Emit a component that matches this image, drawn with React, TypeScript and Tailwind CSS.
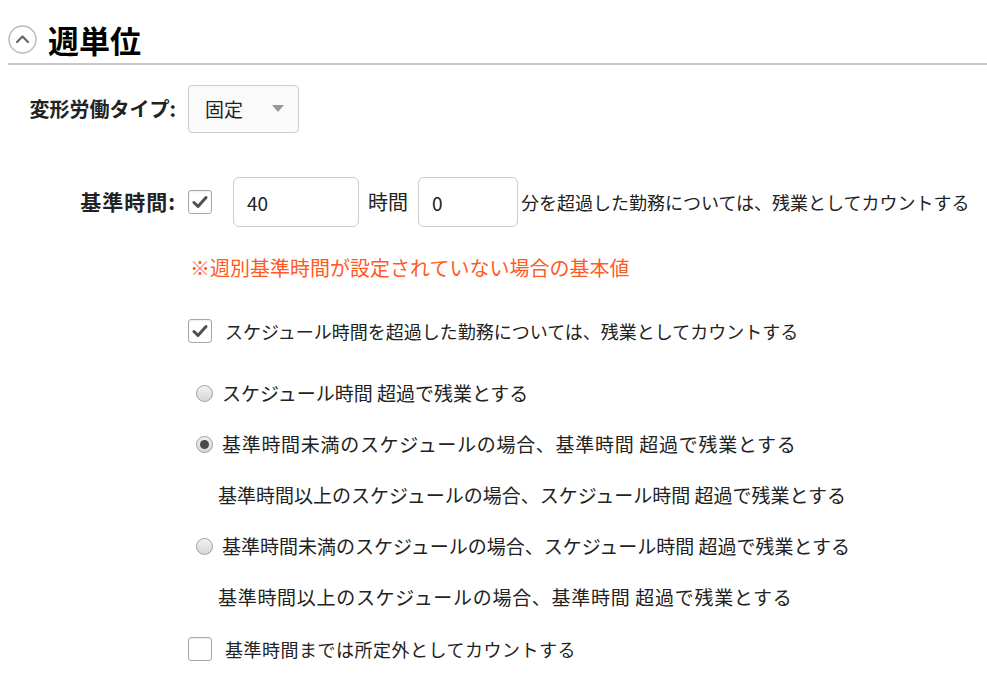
import { useState } from "react";

const font = "font-['Meiryo','Noto_Sans_CJK_JP',sans-serif]";

function CheckBox({ checked, onChange }: { checked: boolean; onChange: () => void }) {
  return (
    <button
      type="button"
      onClick={onChange}
      className="w-[24px] h-[24px] shrink-0 rounded-[3px] border border-[#a8a8a8] bg-white flex items-center justify-center shadow-[inset_0_1px_2px_rgba(0,0,0,0.08)]"
    >
      {checked && (
        <svg width="16" height="14" viewBox="0 0 16 14">
          <path d="M2 7.5 L6 11.5 L14 2.5" fill="none" stroke="#505050" strokeWidth="3" strokeLinecap="round" strokeLinejoin="round" />
        </svg>
      )}
    </button>
  );
}

function Radio({ checked, onChange }: { checked: boolean; onChange: () => void }) {
  return (
    <button
      type="button"
      onClick={onChange}
      className="w-[17px] h-[17px] shrink-0 rounded-full border border-[#a0a0a0] bg-[linear-gradient(#f2f2f2,#d6d6d6)] flex items-center justify-center"
    >
      {checked && <span className="w-[9px] h-[9px] rounded-full bg-[#4a4a4a]" />}
    </button>
  );
}

export default function App() {
  const [useBase, setUseBase] = useState(true);
  const [useSchedule, setUseSchedule] = useState(true);
  const [mode, setMode] = useState(1);
  const [countOut, setCountOut] = useState(false);

  return (
    <div className={`w-[987px] h-[675px] bg-white text-[#222] ${font}`}>
      {/* 見出し */}
      <div className="h-[63px] flex items-center pl-[8px] gap-[11px] pt-[16px]">
        <svg width="29" height="29" viewBox="0 0 29 29">
          <circle cx="14.5" cy="14.5" r="13.5" fill="#fff" stroke="#bbb" strokeWidth="1.5" />
          <path d="M9 17 L14.5 11.5 L20 17" fill="none" stroke="#666" strokeWidth="2.2" strokeLinecap="round" strokeLinejoin="round" />
        </svg>
        <h2 className="text-[31px] font-bold text-black leading-none">週単位</h2>
      </div>
      <div className="ml-[8px] h-[2px] bg-[#c8c8c8]" />

      {/* 変形労働タイプ */}
      <div className="flex items-center mt-[20px]">
        <div className="w-[176px] text-right text-[20px] font-bold text-[#222]">変形労働タイプ:</div>
        <div className="ml-[12px] w-[111px] h-[48px] border border-[#ccc] rounded-[4px] bg-[#fafafa] flex items-center justify-between pl-[16px] pr-[14px] text-[19px]">
          <span>固定</span>
          <svg width="12" height="8" viewBox="0 0 12 8">
            <path d="M0 0 L12 0 L6 7 Z" fill="#999" />
          </svg>
        </div>
      </div>

      {/* 基準時間 */}
      <div className="flex items-center mt-[44px]">
        <div className="w-[176px] text-right text-[21px] font-bold tracking-[1px]">基準時間:</div>
        <div className="ml-[12px] flex items-center text-[18px]">
          <CheckBox checked={useBase} onChange={() => setUseBase(!useBase)} />
          <input
            defaultValue="40"
            className="ml-[21px] w-[126px] h-[50px] border border-[#ccc] rounded-[6px] px-[13px] text-[19px] outline-none"
          />
          <span className="ml-[9px] mr-[10px] text-[20px]">時間</span>
          <input
            defaultValue="0"
            className="w-[100px] h-[50px] border border-[#ccc] rounded-[6px] px-[13px] text-[19px] outline-none"
          />
          <span className="ml-[3px]">分を超過した勤務については、残業としてカウントする</span>
        </div>
      </div>

      <div className="ml-[190px] mt-[27px] text-[20px] text-[#ff5a1f] leading-[28px]">
        ※週別基準時間が設定されていない場合の基本値
      </div>

      {/* スケジュール時間 */}
      <div className="ml-[188px] mt-[36px] flex items-center gap-[13px] text-[18px] h-[26px]">
        <CheckBox checked={useSchedule} onChange={() => setUseSchedule(!useSchedule)} />
        <span>スケジュール時間を超過した勤務については、残業としてカウントする</span>
      </div>

      <div className="ml-[196px] mt-[24px] text-[19px]">
        <div className="h-[51px] flex items-center gap-[9px]">
          <Radio checked={mode === 0} onChange={() => setMode(0)} />
          <span>スケジュール時間 超過で残業とする</span>
        </div>
        <div className="h-[51px] flex items-center gap-[9px]">
          <Radio checked={mode === 1} onChange={() => setMode(1)} />
          <span className="tracking-[0.7px]">基準時間未満のスケジュールの場合、基準時間 超過で残業とする</span>
        </div>
        <div className="h-[51px] flex items-center pl-[22px]">
          基準時間以上のスケジュールの場合、スケジュール時間 超過で残業とする
        </div>
        <div className="h-[51px] flex items-center gap-[9px]">
          <Radio checked={mode === 2} onChange={() => setMode(2)} />
          <span>基準時間未満のスケジュールの場合、スケジュール時間 超過で残業とする</span>
        </div>
        <div className="h-[51px] flex items-center pl-[22px] tracking-[0.7px]">
          基準時間以上のスケジュールの場合、基準時間 超過で残業とする
        </div>
      </div>

      <div className="ml-[188px] mt-[13px] flex items-center gap-[13px] text-[18px] h-[26px]">
        <CheckBox checked={countOut} onChange={() => setCountOut(!countOut)} />
        <span className="tracking-[0.5px]">基準時間までは所定外としてカウントする</span>
      </div>
    </div>
  );
}
